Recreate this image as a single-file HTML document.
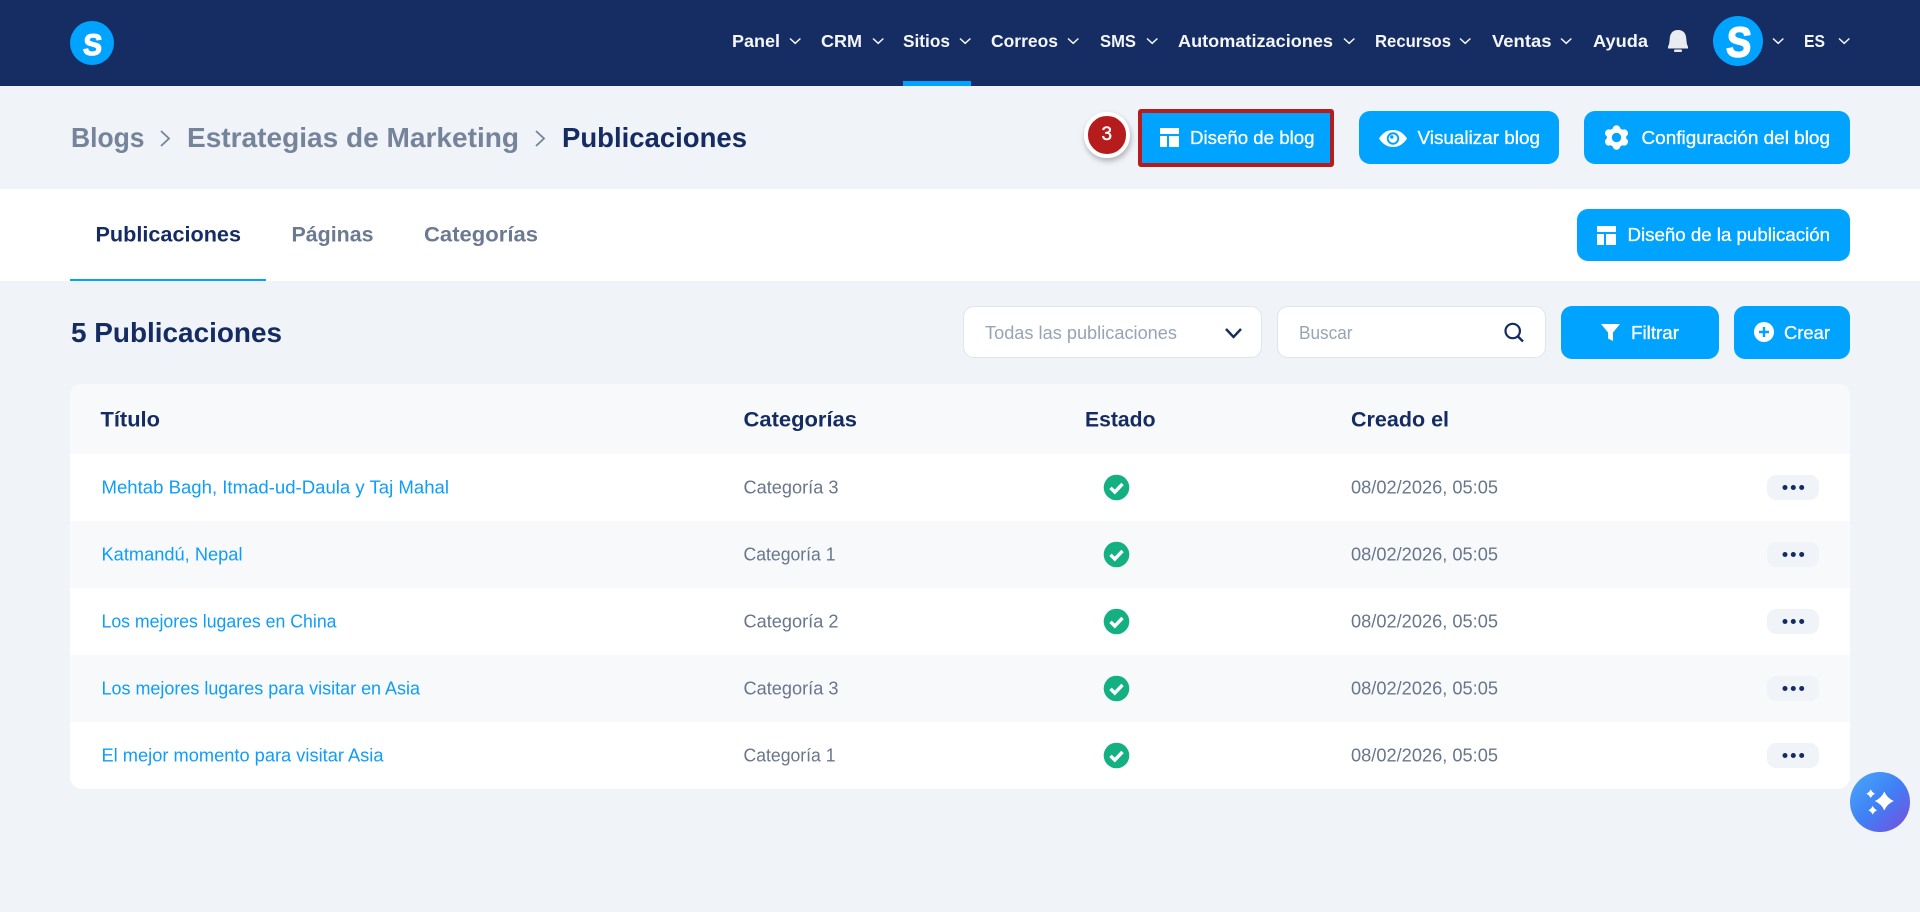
<!DOCTYPE html>
<html lang="es">
<head>
<meta charset="utf-8">
<title>Publicaciones</title>
<style>
html,body{margin:0;padding:0;width:1920px;height:912px;overflow:hidden;background:#f0f3f8;font-family:"Liberation Sans",sans-serif}
.b{position:absolute;box-sizing:border-box}
.blue{background:#00a3ff;border-radius:11px}
svg{position:absolute;left:0;top:0}
text{font-family:"Liberation Sans",sans-serif}
.nav{font-size:17.5px;font-weight:700;fill:#f4f6f9}
.bc{font-size:28px;font-weight:700;fill:#75849a}
.btn{font-size:18.5px;fill:#fff;stroke:#fff;stroke-width:.3}
.tab{font-size:21px;font-weight:700;fill:#6b7a90}
.th{font-size:21px;font-weight:700;fill:#152c62}
.lnk{font-size:18px;fill:#0f9dfb}
.td{font-size:18px;fill:#68768c}
.ph{font-size:18px;fill:#98a4b5}
.ch{fill:none;stroke:#f4f6f9;stroke-width:1.5}
</style>
</head>
<body>
<div class="b" style="left:0;top:0;width:1920px;height:86px;background:#152d63"></div>
<div class="b" style="left:903px;top:81px;width:68px;height:5px;background:#00a3ff"></div>
<div class="b" style="left:70px;top:21px;width:44px;height:44px;border-radius:50%;background:#00a3ff"></div>
<div class="b" style="left:1713px;top:16px;width:50px;height:50px;border-radius:50%;background:#00a3ff"></div>

<div class="b" style="left:1138px;top:109px;width:196px;height:58px;background:#00a3ff;border:4.5px solid #b71c1c;border-radius:3px"></div>
<div class="b blue" style="left:1359px;top:111px;width:200px;height:53px"></div>
<div class="b blue" style="left:1584px;top:111px;width:266px;height:53px"></div>

<div class="b" style="left:0;top:189px;width:1920px;height:92px;background:#fff"></div>
<div class="b" style="left:70px;top:279px;width:196px;height:2px;background:#00a3ff"></div>
<div class="b blue" style="left:1577px;top:209px;width:273px;height:52px"></div>

<div class="b" style="left:963px;top:306px;width:299px;height:52px;background:#fff;border:1px solid #dfe4eb;border-radius:11px"></div>
<div class="b" style="left:1277px;top:306px;width:269px;height:52px;background:#fff;border:1px solid #dfe4eb;border-radius:11px"></div>
<div class="b blue" style="left:1561px;top:306px;width:158px;height:53px"></div>
<div class="b blue" style="left:1734px;top:306px;width:116px;height:53px"></div>

<div class="b" style="left:70px;top:384px;width:1780px;height:405px;background:#fff;border-radius:12px;overflow:hidden">
  <div class="b" style="left:0;top:0;width:1780px;height:70px;background:#f8f9fb"></div>
  <div class="b" style="left:0;top:137px;width:1780px;height:67px;background:#f8f9fb"></div>
  <div class="b" style="left:0;top:271px;width:1780px;height:67px;background:#f8f9fb"></div>
</div>

<div class="b" style="left:1767px;top:475px;width:52px;height:25px;background:#f0f3f8;border-radius:9px"></div>
<div class="b" style="left:1767px;top:542px;width:52px;height:25px;background:#f0f3f8;border-radius:9px"></div>
<div class="b" style="left:1767px;top:609px;width:52px;height:25px;background:#f0f3f8;border-radius:9px"></div>
<div class="b" style="left:1767px;top:676px;width:52px;height:25px;background:#f0f3f8;border-radius:9px"></div>
<div class="b" style="left:1767px;top:743px;width:52px;height:25px;background:#f0f3f8;border-radius:9px"></div>

<div class="b" style="left:1850px;top:772px;width:60px;height:60px;border-radius:50%;background:linear-gradient(135deg,#4aa9f8 0%,#3f80f6 50%,#7a4cdc 100%)"></div>
<div class="b" style="left:1084px;top:112px;width:45.5px;height:45.5px;border-radius:50%;background:#b71c1c;border:4px solid #fff;box-shadow:1px 3px 6px rgba(0,0,0,.28)"></div>

<svg width="1920" height="912" viewBox="0 0 1920 912" xmlns="http://www.w3.org/2000/svg">
  <!-- logos -->
  <text transform="translate(82.500 55) skewX(-4)" x="0" y="0" font-size="30" font-weight="700" fill="#fff" stroke="#fff" stroke-width="1.200" textLength="19" lengthAdjust="spacingAndGlyphs">S</text>
  <text transform="translate(1725.500 56.500) skewX(-4)" x="0" y="0" font-size="42" font-weight="700" fill="#fff" stroke="#fff" stroke-width="1.600" textLength="25" lengthAdjust="spacingAndGlyphs">S</text>

  <!-- nav -->
  <text class="nav" x="732" y="47" textLength="48" lengthAdjust="spacingAndGlyphs">Panel</text>
  <text class="nav" x="821" y="47" textLength="41" lengthAdjust="spacingAndGlyphs">CRM</text>
  <text class="nav" x="903" y="47" textLength="47" lengthAdjust="spacingAndGlyphs">Sitios</text>
  <text class="nav" x="991" y="47" textLength="67" lengthAdjust="spacingAndGlyphs">Correos</text>
  <text class="nav" x="1100" y="47" textLength="36" lengthAdjust="spacingAndGlyphs">SMS</text>
  <text class="nav" x="1178" y="47" textLength="155" lengthAdjust="spacingAndGlyphs">Automatizaciones</text>
  <text class="nav" x="1375" y="47" textLength="76" lengthAdjust="spacingAndGlyphs">Recursos</text>
  <text class="nav" x="1492" y="47" textLength="59.500" lengthAdjust="spacingAndGlyphs">Ventas</text>
  <text class="nav" x="1593" y="47" textLength="55" lengthAdjust="spacingAndGlyphs">Ayuda</text>
  <text class="nav" x="1804" y="47" textLength="21" lengthAdjust="spacingAndGlyphs">ES</text>
  <g class="ch">
    <path d="M790 38.500l5.200 4.800 5.200-4.800"/>
    <path d="M873 38.500l5.200 4.800 5.200-4.800"/>
    <path d="M960 38.500l5.200 4.800 5.200-4.800"/>
    <path d="M1068 38.500l5.200 4.800 5.200-4.800"/>
    <path d="M1147 38.500l5.200 4.800 5.200-4.800"/>
    <path d="M1344 38.500l5.200 4.800 5.200-4.800"/>
    <path d="M1460 38.500l5.200 4.800 5.200-4.800"/>
    <path d="M1561 38.500l5.200 4.800 5.200-4.800"/>
    <path d="M1773 38.500l5.200 4.800 5.200-4.800"/>
    <path d="M1839 38.500l5.200 4.800 5.200-4.800"/>
  </g>
  <!-- bell -->
  <g fill="#e8ebef">
    <path d="M1678 30C1684 30 1686 34 1686.300 39C1686.600 43 1687 45 1688 46.500L1688 48.500L1668 48.500L1668 46.500C1669 45 1669.400 43 1669.700 39C1670 34 1672 30 1678 30Z"/>
    <rect x="1674" y="49.500" width="8" height="2.500" rx="1"/>
  </g>

  <!-- breadcrumb -->
  <text class="bc" x="71" y="147" textLength="73.500" lengthAdjust="spacingAndGlyphs">Blogs</text>
  <path d="M161 131l8 7.500-8 7.500" fill="none" stroke="#75849a" stroke-width="1.800"/>
  <text class="bc" x="187" y="147" textLength="332" lengthAdjust="spacingAndGlyphs">Estrategias de Marketing</text>
  <path d="M536 131l8 7.500-8 7.500" fill="none" stroke="#75849a" stroke-width="1.800"/>
  <text class="bc" x="562" y="147" textLength="185" lengthAdjust="spacingAndGlyphs" style="fill:#152c62">Publicaciones</text>

  <!-- badge -->
  <text x="1106.800" y="140" text-anchor="middle" font-size="19" fill="#fff" stroke="#fff" stroke-width=".4">3</text>

  <!-- header buttons -->
  <path d="M1160 128h19v6h-19zM1160 136h7v11h-7zM1169 136h10v11h-10z" fill="#fff"/>
  <text class="btn" x="1190" y="144" textLength="124.500" lengthAdjust="spacingAndGlyphs">Diseño de blog</text>

  <path d="M1379 138.500C1383 132.500 1387.500 130 1393 130s10 2.500 14 8.500c-4 6-8.500 8.500-14 8.500s-10-2.500-14-8.500z" fill="#fff"/>
  <circle cx="1393" cy="138.500" r="6.200" fill="#00a3ff"/>
  <circle cx="1393" cy="138.500" r="4.300" fill="#fff"/>
  <circle cx="1391.800" cy="137" r="1.700" fill="#00a3ff"/>
  <text class="btn" x="1417.500" y="144" textLength="122.500" lengthAdjust="spacingAndGlyphs">Visualizar blog</text>

  <circle cx="1616.500" cy="137.500" r="7.200" fill="none" stroke="#fff" stroke-width="5"/>
  <g fill="#fff">
    <circle cx="1616.500" cy="129" r="3.800"/><circle cx="1616.500" cy="146" r="3.800"/>
    <circle cx="1608.800" cy="133.200" r="3.800"/><circle cx="1624.200" cy="133.200" r="3.800"/>
    <circle cx="1608.800" cy="141.800" r="3.800"/><circle cx="1624.200" cy="141.800" r="3.800"/>
  </g>
  <circle cx="1616.500" cy="137.500" r="4" fill="#00a3ff"/>
  <text class="btn" x="1641.500" y="144" textLength="188.500" lengthAdjust="spacingAndGlyphs">Configuración del blog</text>

  <!-- tabs -->
  <text class="tab" x="95.500" y="241.500" textLength="145.500" lengthAdjust="spacingAndGlyphs" style="fill:#152c62">Publicaciones</text>
  <text class="tab" x="291.500" y="241.500" textLength="82" lengthAdjust="spacingAndGlyphs">Páginas</text>
  <text class="tab" x="424" y="241.500" textLength="114" lengthAdjust="spacingAndGlyphs">Categorías</text>

  <path d="M1597 226h19v6h-19zM1597 234h7v11h-7zM1606 234h10v11h-10z" fill="#fff"/>
  <text class="btn" x="1627.500" y="241" textLength="202.500" lengthAdjust="spacingAndGlyphs">Diseño de la publicación</text>

  <!-- toolbar -->
  <text x="71" y="342" font-size="28" font-weight="700" fill="#152c62" textLength="211" lengthAdjust="spacingAndGlyphs">5 Publicaciones</text>
  <text class="ph" x="985" y="339" textLength="192" lengthAdjust="spacingAndGlyphs">Todas las publicaciones</text>
  <path d="M1226 329l7.500 8 7.500-8" fill="none" stroke="#152c62" stroke-width="2.400"/>
  <text class="ph" x="1299" y="339" textLength="53.500" lengthAdjust="spacingAndGlyphs">Buscar</text>
  <circle cx="1512.700" cy="331" r="7.200" fill="none" stroke="#152c62" stroke-width="2.200"/>
  <path d="M1518 336.500l5 5" stroke="#152c62" stroke-width="2.400" fill="none"/>

  <path d="M1601 324h19l-7 8.500v8.500l-5-2.500v-6z" fill="#fff"/>
  <text class="btn" x="1631" y="339" textLength="48" lengthAdjust="spacingAndGlyphs">Filtrar</text>
  <circle cx="1764" cy="332" r="10" fill="#fff"/>
  <path d="M1764 327v10M1759 332h10" stroke="#00a3ff" stroke-width="2.400" fill="none"/>
  <text class="btn" x="1784" y="339" textLength="46" lengthAdjust="spacingAndGlyphs">Crear</text>

  <!-- table head -->
  <text class="th" x="100.500" y="426.500" textLength="59.500" lengthAdjust="spacingAndGlyphs">Título</text>
  <text class="th" x="743.500" y="426.500" textLength="113.500" lengthAdjust="spacingAndGlyphs">Categorías</text>
  <text class="th" x="1085" y="426.500" textLength="70.500" lengthAdjust="spacingAndGlyphs">Estado</text>
  <text class="th" x="1351" y="426.500" textLength="98" lengthAdjust="spacingAndGlyphs">Creado el</text>

  <!-- rows -->
  <text class="lnk" x="101.500" y="493.500" textLength="347.500" lengthAdjust="spacingAndGlyphs">Mehtab Bagh, Itmad-ud-Daula y Taj Mahal</text>
  <text class="td" x="743.500" y="493.500" textLength="95" lengthAdjust="spacingAndGlyphs">Categoría 3</text>
  <text class="td" x="1351" y="493.500" textLength="147" lengthAdjust="spacingAndGlyphs">08/02/2026, 05:05</text>

  <text class="lnk" x="101.500" y="560.500" textLength="141" lengthAdjust="spacingAndGlyphs">Katmandú, Nepal</text>
  <text class="td" x="743.500" y="560.500" textLength="92" lengthAdjust="spacingAndGlyphs">Categoría 1</text>
  <text class="td" x="1351" y="560.500" textLength="147" lengthAdjust="spacingAndGlyphs">08/02/2026, 05:05</text>

  <text class="lnk" x="101.500" y="627.500" textLength="235" lengthAdjust="spacingAndGlyphs">Los mejores lugares en China</text>
  <text class="td" x="743.500" y="627.500" textLength="95" lengthAdjust="spacingAndGlyphs">Categoría 2</text>
  <text class="td" x="1351" y="627.500" textLength="147" lengthAdjust="spacingAndGlyphs">08/02/2026, 05:05</text>

  <text class="lnk" x="101.500" y="694.500" textLength="318.500" lengthAdjust="spacingAndGlyphs">Los mejores lugares para visitar en Asia</text>
  <text class="td" x="743.500" y="694.500" textLength="95" lengthAdjust="spacingAndGlyphs">Categoría 3</text>
  <text class="td" x="1351" y="694.500" textLength="147" lengthAdjust="spacingAndGlyphs">08/02/2026, 05:05</text>

  <text class="lnk" x="101.500" y="761.500" textLength="282" lengthAdjust="spacingAndGlyphs">El mejor momento para visitar Asia</text>
  <text class="td" x="743.500" y="761.500" textLength="92" lengthAdjust="spacingAndGlyphs">Categoría 1</text>
  <text class="td" x="1351" y="761.500" textLength="147" lengthAdjust="spacingAndGlyphs">08/02/2026, 05:05</text>

  <!-- status checks -->
  <g fill="#14b082">
    <circle cx="1116.500" cy="487.500" r="12.800"/><circle cx="1116.500" cy="554.500" r="12.800"/>
    <circle cx="1116.500" cy="621.500" r="12.800"/><circle cx="1116.500" cy="688.500" r="12.800"/>
    <circle cx="1116.500" cy="755.500" r="12.800"/>
  </g>
  <g fill="none" stroke="#fff" stroke-width="3.400">
    <path d="M1110.500 487.800l4.300 4.300 7.700-8.200"/>
    <path d="M1110.500 554.800l4.300 4.300 7.700-8.200"/>
    <path d="M1110.500 621.800l4.300 4.300 7.700-8.200"/>
    <path d="M1110.500 688.800l4.300 4.300 7.700-8.200"/>
    <path d="M1110.500 755.800l4.300 4.300 7.700-8.200"/>
  </g>

  <!-- dots -->
  <g fill="#152c62">
    <circle cx="1785" cy="487.500" r="2.500"/><circle cx="1793.300" cy="487.500" r="2.500"/><circle cx="1801.700" cy="487.500" r="2.500"/>
    <circle cx="1785" cy="554.500" r="2.500"/><circle cx="1793.300" cy="554.500" r="2.500"/><circle cx="1801.700" cy="554.500" r="2.500"/>
    <circle cx="1785" cy="621.500" r="2.500"/><circle cx="1793.300" cy="621.500" r="2.500"/><circle cx="1801.700" cy="621.500" r="2.500"/>
    <circle cx="1785" cy="688.500" r="2.500"/><circle cx="1793.300" cy="688.500" r="2.500"/><circle cx="1801.700" cy="688.500" r="2.500"/>
    <circle cx="1785" cy="755.500" r="2.500"/><circle cx="1793.300" cy="755.500" r="2.500"/><circle cx="1801.700" cy="755.500" r="2.500"/>
  </g>

  <!-- sparkle -->
  <g fill="#fff">
    <path d="M1884.300 791.500Q1887 798 1893.800 801Q1887 804 1884.300 810.500Q1881.600 804 1874.800 801Q1881.600 798 1884.300 791.500z"/>
    <path d="M1870.700 789.200Q1872 792.400 1875.200 793.700Q1872 795 1870.700 798.200Q1869.400 795 1866.200 793.700Q1869.400 792.400 1870.700 789.200z"/>
    <path d="M1872.700 805.800Q1874 809 1877.200 810.300Q1874 811.600 1872.700 814.800Q1871.400 811.600 1868.200 810.300Q1871.400 809 1872.700 805.800z"/>
  </g>
</svg>
</body>
</html>
